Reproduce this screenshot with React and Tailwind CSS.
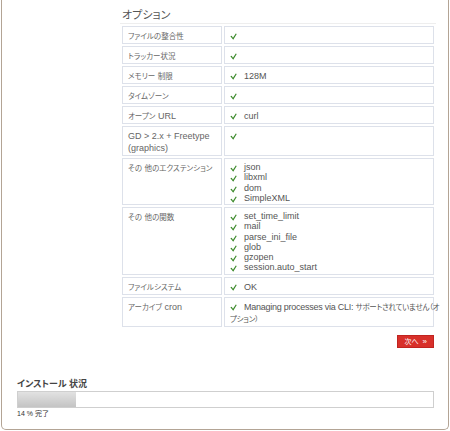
const ROWS = [
  { label: 'ファイルの整合性', items: [''] },
  { label: 'トラッカー状況', items: [''] },
  { label: 'メモリー 制限', items: ['128M'] },
  { label: 'タイムゾーン', items: [''] },
  { label: 'オープン URL', items: ['curl'] },
  { label: 'GD > 2.x + Freetype (graphics)', items: [''] },
  { label: 'その 他のエクステンション', items: ['json', 'libxml', 'dom', 'SimpleXML'] },
  {
    label: 'その 他の関数',
    items: ['set_time_limit', 'mail', 'parse_ini_file', 'glob', 'gzopen', 'session.auto_start'],
  },
  { label: 'ファイルシステム', items: ['OK'] },
  { label: 'アーカイブ cron', items: [''], cron: true },
]

// CJK runs are set a touch smaller so they sit like the original
function Jp({ text }) {
  const parts = text.split(/([\u3000-\u9fff\uff00-\uffef]+)/)
  return parts.map((p, i) =>
    i % 2 === 1 ? (
      <span key={i} className="text-[7.5px] leading-none">{p}</span>
    ) : (
      p
    )
  )
}

function Check() {
  return (
    <svg width="7" height="7" viewBox="0 0 8 8" className="shrink-0 mt-[3px]">
      <path d="M0.4 3.6 L1.9 3.1 L3.4 5.4 L6.6 0.6 L7.7 1.1 L3.7 7.6 Z" fill="#3d8a2c" />
    </svg>
  )
}

export default function App() {
  const font = { fontFamily: '"Liberation Sans", Arial, "Noto Sans CJK JP", sans-serif' }
  return (
    <div className="bg-white w-[450px] h-[431px] overflow-hidden [font-feature-settings:'palt']" style={font}>
      <div className="ml-[1px] w-[448px] h-[430px] border-x border-b border-[#b3a495] rounded-b-[5px] bg-white flex flex-col pl-[15px] pr-[14px]">
        <div className="ml-[105px] pt-[8px]">
          <h2 className="text-[11px] leading-[14px] text-[#555]">オプション</h2>
          <table className="table-fixed mt-[1px] w-[316px] border-separate border-spacing-[2px] border-t border-[#eeeeee] -mx-[2px]">
            <colgroup>
              <col className="w-[100px]" />
              <col className="w-[210px]" />
            </colgroup>
            <tbody>
              {ROWS.map((r) => (
                <tr key={r.label}>
                  <td className="align-top border border-[#dde1ea] px-[5px] pt-[3px] pb-[1px] text-[9px] leading-[12px] text-[#666]">
                    <Jp text={r.label} />
                  </td>
                  <td className="align-top border border-[#dde1ea] pl-[5px] pr-[4px] pt-[3px] pb-[1px] text-[9px] text-[#555]">
                    {r.cron ? (
                      <div className="leading-[12px] whitespace-nowrap tracking-[-0.25px]">
                        <span className="inline-block align-[-1px] mr-[7px]">
                          <Check />
                        </span>
                        <Jp text="Managing processes via CLI: サポートされていません（オ" />
                        <br />
                        <Jp text="プション）" />
                      </div>
                    ) : (
                      r.items.map((it, i) => (
                        <div key={i} className={`flex gap-[7px] ${r.items.length > 1 ? 'leading-[10.25px]' : 'leading-[12px]'}`}>
                          <Check />
                          <span>{it}</span>
                        </div>
                      ))
                    )}
                  </td>
                </tr>
              ))}
            </tbody>
          </table>
          <div className="flex justify-end mt-[6px]">
            <button className="bg-[#d8302a] border border-[#c02420] text-white text-[7px] leading-[11px] px-[6px] h-[13px] flex items-center gap-[4px]">
              次へ <span className="text-[8px]">»</span>
            </button>
          </div>
        </div>
        <div className="mt-[30px]">
          <div className="text-[9px] leading-[12px] font-bold text-[#444]">インストール 状況</div>
          <div className="mt-[1px] h-[17px] border border-[#cfcfcf] bg-white">
            <div className="h-full w-[14%] bg-gradient-to-b from-[#e2e2e2] to-[#c4c4c4]" />
          </div>
          <div className="mt-[1px] text-[7px] leading-[9px] text-[#333]">14 % 完了</div>
        </div>
      </div>
    </div>
  )
}
